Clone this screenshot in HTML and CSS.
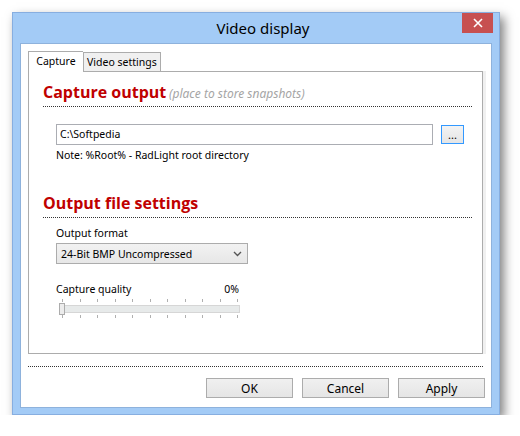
FILE: index.html
```html
<!DOCTYPE html>
<html>
<head>
<meta charset="utf-8">
<link rel="stylesheet" href="styles.css">
</head>
<body>
<div class="window">
  <div class="titlebar">
    <span></span>
    <span class="title">Video display</span>
    <button class="close" aria-label="Close">
      <svg width="10" height="10" viewBox="0 0 10 10"><path d="M1 1 L9 9 M9 1 L1 9" stroke="#fff" stroke-width="1.6"/></svg>
    </button>
  </div>
  <div class="client">
    <div class="tabs">
      <div class="tab active">Capture</div>
      <div class="tab">Video settings</div>
    </div>
    <div class="panel">
      <div class="heading"><span class="h">Capture output</span> <span class="hint">(place to store snapshots)</span></div>
      <div class="row path-row">
        <div class="input">C:\Softpedia</div>
        <button class="browse">...</button>
      </div>
      <div class="note">Note: %Root% - RadLight root directory</div>
      <div class="heading heading2"><span class="h">Output file settings</span></div>
      <div class="label">Output format</div>
      <div class="select">
        <span>24-Bit BMP Uncompressed</span>
        <svg width="9" height="6" viewBox="0 0 9 6"><path d="M1 1 L4.5 4.5 L8 1" fill="none" stroke="#555" stroke-width="1.4"/></svg>
      </div>
      <div class="quality">
        <span>Capture quality</span><span>0%</span>
      </div>
      <div class="slider">
        <div class="ticks"><i></i><i></i><i></i><i></i><i></i><i></i><i></i><i></i><i></i><i></i><i></i></div>
        <div class="track"><div class="thumb"></div></div>
        <div class="ticks"><i></i><i></i><i></i><i></i><i></i><i></i><i></i><i></i><i></i><i></i><i></i></div>
      </div>
    </div>
    <div class="sep"></div>
    <div class="buttons">
      <button class="btn">OK</button>
      <button class="btn">Cancel</button>
      <button class="btn">Apply</button>
    </div>
  </div>
</div>
</body>
</html>
```
FILE: styles.css
```css
html, body { margin: 0; padding: 0; background: #fff; }
body { font-family: "Noto Sans", "Liberation Sans", sans-serif; font-size: 10.5px; color: #000; }

.window {
  margin: 12px 0 0 12px;
  width: 488px;
  height: 403px;
  box-sizing: border-box;
  background: #a3cbf6;
  border: 1px solid #87aee0;
  padding: 0 7px 6px 7px;
  display: flex;
  flex-direction: column;
  box-shadow: 4px 5px 10px rgba(0,0,0,0.5);
}
.titlebar {
  height: 30px;
  display: grid;
  grid-template-columns: 1fr auto 1fr;
  align-items: start;
}
.title {
  font-size: 15px;
  line-height: 30px;
  color: #000;
  padding-left: 14px;
}
.close {
  justify-self: end;
  margin: 0 -1px 0 0;
  width: 31px;
  height: 20px;
  border: 0;
  padding: 0;
  background: #c75050;
  display: flex;
  align-items: center;
  justify-content: center;
}
.client {
  flex: 1;
  background: #fff;
  border: 1px solid #8eb2dc;
  padding: 7px 8px 0 7px;
  display: flex;
  flex-direction: column;
}
.tabs { display: flex; align-items: flex-end; height: 20px; position: relative; z-index: 1; }
.tab {
  box-sizing: border-box;
  border: 1px solid #acacac;
  border-bottom: 0;
  padding: 0 3px;
  height: 19px;
  line-height: 18px;
  background: #f0f0f0;
  font-size: 10.5px;
}
.tab.active {
  height: 21px;
  width: 55px;
  text-align: center;
  background: #fff;
  padding: 0;
  margin-bottom: -1px;
  border-right: 0;
  line-height: 19px;
}
.panel {
  height: 283px;
  box-sizing: border-box;
  border: 1px solid #acacac;
  box-shadow: 3px 0 0 #f0f0f0;
  padding: 9px 10px 0 14px;
}
.heading {
  border-bottom: 1px dotted #333;
  height: 25px;
  white-space: nowrap;
}
.h {
  font-family: "Open Sans", "Noto Sans", sans-serif;
  font-weight: bold;
  font-size: 16px;
  color: #c00000;
  line-height: 22px;
}
.hint {
  font-style: italic;
  color: #a5a5a5;
  font-size: 12px;
}
.path-row {
  display: flex;
  margin: 17px 0 0 13px;
  align-items: center;
}
.input {
  width: 377px;
  height: 21px;
  box-sizing: border-box;
  border: 1px solid #abadb3;
  padding: 0 3px;
  line-height: 19px;
}
.browse {
  margin-left: 8px;
  width: 23px;
  height: 19px;
  box-sizing: border-box;
  border: 1px solid #3399ff;
  background: linear-gradient(#f3f3f3, #e5e5e5);
  font-family: inherit;
  font-size: 11px;
  padding: 0;
  line-height: 12px;
  color: #000;
}
.note { margin: 2px 0 0 13px; line-height: 16px; }
.heading2 { margin-top: 29px; }
.label { margin: 7px 0 0 13px; line-height: 16px; }
.select {
  margin: 2px 0 0 13px;
  width: 192px;
  height: 21px;
  box-sizing: border-box;
  border: 1px solid #acacac;
  background: linear-gradient(#f2f2f2, #e7e7e7);
  display: flex;
  justify-content: space-between;
  align-items: center;
  padding: 0 5px 0 4px;
}
.quality {
  margin: 17px 0 0 13px;
  width: 183px;
  display: flex;
  justify-content: space-between;
  line-height: 16px;
}
.slider { margin: 2px 0 0 17px; width: 180px; }
.ticks { display: flex; justify-content: space-between; height: 4px; padding: 0 2px 0 2px; }
.ticks i { width: 1px; height: 3px; background: #b0b0b0; display: block; }
.track {
  margin: 2px 0 2px 0;
  height: 8px;
  background: #e7eaea;
  border: 1px solid #d6d6d6;
  box-sizing: border-box;
  position: relative;
}
.thumb {
  position: absolute;
  left: -2px;
  top: -3px;
  width: 6px;
  height: 12px;
  box-sizing: border-box;
  border: 1px solid #acacac;
  background: #ececec;
}
.sep {
  margin-top: 12px;
  border-top: 1px dotted #333;
  width: 455px;
}
.buttons {
  display: flex;
  justify-content: flex-end;
  gap: 9px;
  margin: 11px 0 0 0;
  width: 457px;
}
.btn {
  width: 87px;
  height: 20px;
  box-sizing: border-box;
  border: 1px solid #acacac;
  background: linear-gradient(#f0f0f0, #e5e5e5);
  font-family: inherit;
  font-size: 12px;
  padding: 0;
  color: #000;
}
```
